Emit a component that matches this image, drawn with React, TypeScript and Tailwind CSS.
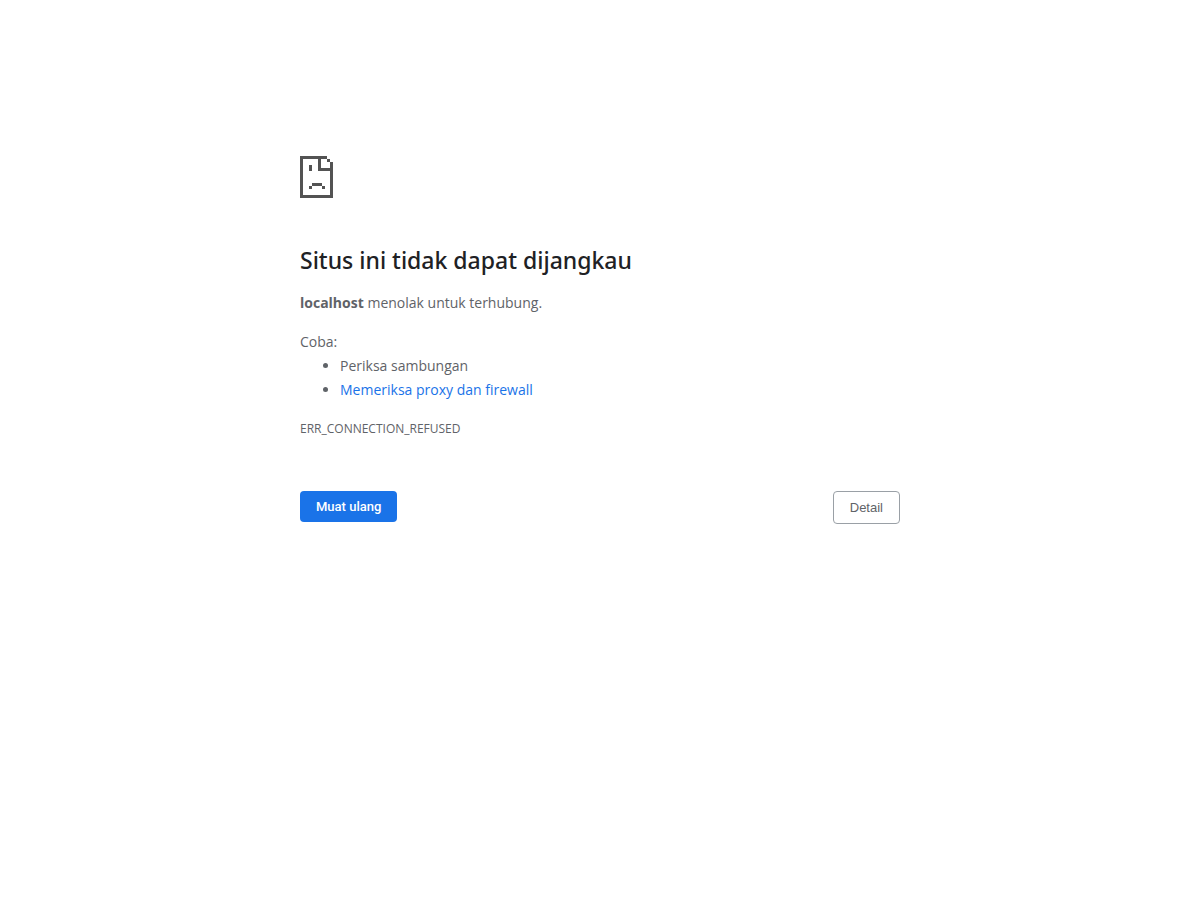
function SadPageIcon() {
  return (
    <svg
      className="block h-[42px] w-[33px] text-[#535353]"
      viewBox="0 0 33 42"
      fill="currentColor"
      shapeRendering="crispEdges"
      aria-hidden="true"
    >
      <path d="M0 0H27V3H21V12H30V6H33V42H0ZM3 3V39H30V15H18V3Z" fillRule="evenodd" />
      <path d="M27 3h3v3h-3zM9 9h3v6H9zM12 27h10v3H12zM9 30h3v3H9zM22 30h3v3h-3z" />
    </svg>
  );
}

export default function App() {
  return (
    <main className="mx-auto max-w-[600px] pt-[156px] font-['Open_Sans','Noto_Sans',sans-serif] text-[14px] leading-6 text-[#5f6368]">
      <SadPageIcon />
      <h1 className="mt-11 font-['Noto_Sans',sans-serif] text-[23px] leading-9 font-medium text-[#202124]">
        Situs ini tidak dapat dijangkau
      </h1>
      <p className="mt-[13px]">
        <strong className="font-bold">localhost</strong> menolak untuk terhubung.
      </p>
      <div className="mt-[15px]">
        <p>Coba:</p>
        <ul className="list-disc pl-10">
          <li>Periksa sambungan</li>
          <li>
            <a href="#proxy" className="text-[#1a73e8]">
              Memeriksa proxy dan firewall
            </a>
          </li>
        </ul>
      </div>
      <p className="mt-[15px] text-[12px]">ERR_CONNECTION_REFUSED</p>
      <div className="mt-[50px] flex items-start justify-between font-['Liberation_Sans',sans-serif] text-[13px] leading-[15px]">
        <button type="button" className="rounded-[4px] bg-[#1a73e8] px-4 py-2 font-['Roboto',sans-serif] font-medium text-white">
          Muat ulang
        </button>
        <button type="button" className="rounded-[4px] border border-[#9aa0a6] px-4 py-2">
          Detail
        </button>
      </div>
    </main>
  );
}
